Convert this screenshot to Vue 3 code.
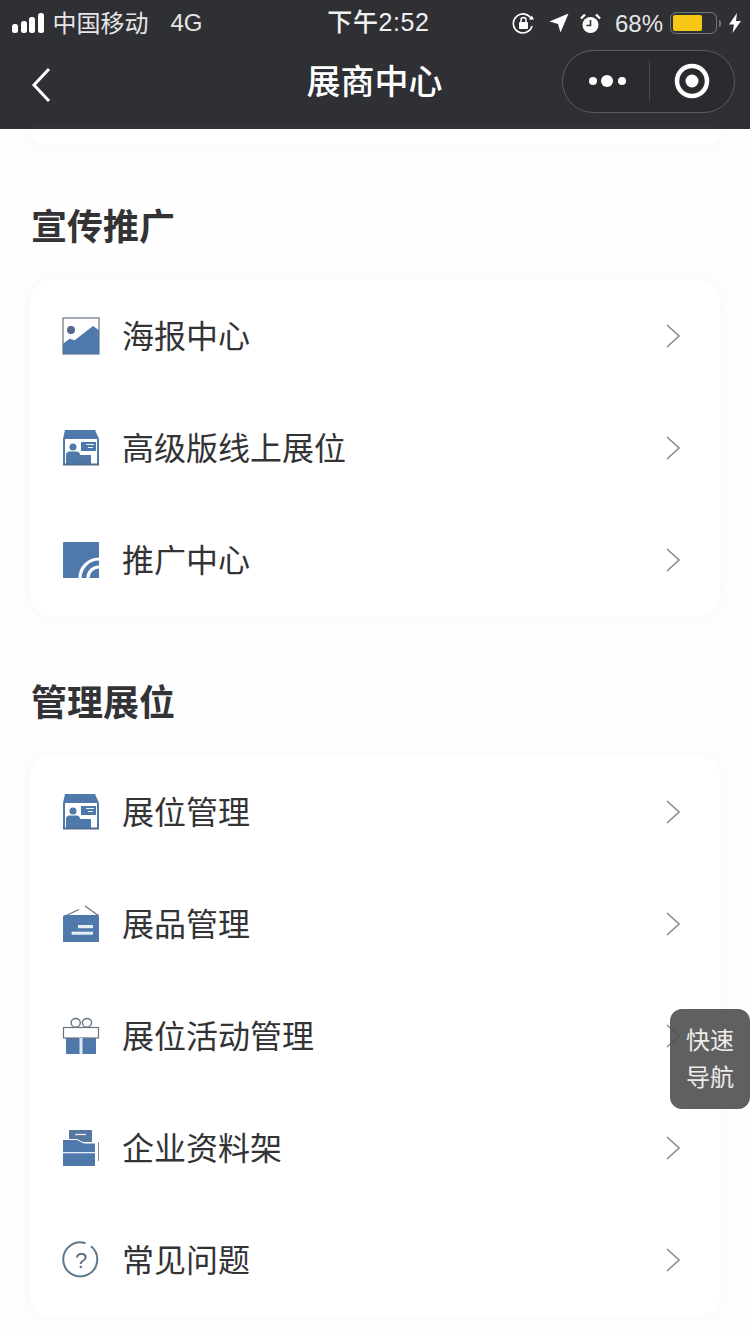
<script setup>
const sections = [
  {
    title: '宣传推广',
    items: [
      { icon: 'poster', label: '海报中心' },
      { icon: 'booth', label: '高级版线上展位' },
      { icon: 'promo', label: '推广中心' },
    ],
  },
  {
    title: '管理展位',
    items: [
      { icon: 'booth', label: '展位管理' },
      { icon: 'sign', label: '展品管理' },
      { icon: 'gift', label: '展位活动管理' },
      { icon: 'folder', label: '企业资料架' },
      { icon: 'help', label: '常见问题' },
    ],
  },
]
</script>

<template>
  <div class="page">
    <header class="header">
      <div class="status">
        <div class="status-left">
          <div class="signal">
            <i class="b1"></i><i class="b2"></i><i class="b3"></i><i class="b4"></i>
          </div>
          <span class="carrier">中国移动</span>
          <span class="net">4G</span>
        </div>
        <div class="time">下午2:52</div>
        <div class="status-right">
          <svg class="s-lock" width="23" height="22" viewBox="0 0 23 22">
            <path d="M19.5 7.5A9.5 9.5 0 1 0 20 14" fill="none" stroke="#fff" stroke-width="1.6" />
            <path d="M17 7.5h5l-2.2-4z" fill="#fff" />
            <rect x="7" y="10" width="9" height="7" rx="1" fill="#fff" />
            <path d="M9 10V8a2.5 2.5 0 0 1 5 0v2" fill="none" stroke="#fff" stroke-width="1.5" />
          </svg>
          <svg class="s-loc" width="20" height="20" viewBox="0 0 20 20">
            <path d="M19.5 .5 11.5 19.5 9 11 .5 8.5z" fill="#fff" />
          </svg>
          <svg class="s-alarm" width="21" height="21" viewBox="0 0 21 21">
            <circle cx="10.5" cy="12" r="8" fill="#fff" />
            <path d="M10.5 7v5.5H6.5" fill="none" stroke="#2f3034" stroke-width="1.6" />
            <path d="M1 5.5 5 1.5M20 5.5 16 1.500" stroke="#fff" stroke-width="2.4" />
          </svg>
          <span class="pct">68%</span>
          <div class="battery"><div class="battery-fill"></div></div>
          <div class="nub"></div>
          <svg class="s-bolt" width="12" height="20" viewBox="0 0 12 20">
            <path d="M8 0 0 11.500h5L3.500 20 12 8H7z" fill="#fff" />
          </svg>
        </div>
      </div>
      <nav class="nav">
        <svg class="back" width="20" height="36" viewBox="0 0 20 36">
          <path d="M18 2 3 18l15 16" fill="none" stroke="#fff" stroke-width="3" />
        </svg>
        <div class="title">展商中心</div>
        <div class="capsule">
          <svg width="44" height="16" viewBox="0 0 44 16">
            <circle cx="7" cy="8" r="4" fill="#fff" />
            <circle cx="21" cy="8" r="6" fill="#fff" />
            <circle cx="36" cy="8" r="4" fill="#fff" />
          </svg>
          <div class="divider"></div>
          <svg width="36" height="36" viewBox="0 0 36 36">
            <circle cx="18" cy="18" r="15" fill="none" stroke="#fff" stroke-width="4.500" />
            <circle cx="18" cy="18" r="6.500" fill="#fff" />
          </svg>
        </div>
      </nav>
    </header>

    <div class="card-tail"></div>

    <section v-for="section in sections" :key="section.title" class="section">
      <h2 class="section-title">{{ section.title }}</h2>
      <div class="card">
        <div v-for="item in section.items" :key="item.label" class="row">
          <svg class="icon" width="38" height="38" viewBox="-1 -1 38 38">
            <template v-if="item.icon === 'poster'">
              <rect x="0" y="0" width="36" height="36" fill="#fff" stroke="#667383" stroke-width="1.200" />
              <circle cx="8" cy="12" r="4" fill="#55688a" />
              <path d="M0 25.700 6.700 20.700 11.700 22.300 30 8 36 12.300V36H0z" fill="#4f78ab" />
            </template>
            <template v-else-if="item.icon === 'booth'">
              <path d="M2 0h30l4 9H0z" fill="#4f78ab" />
              <path d="M1 9v25M35 9v25" stroke="#4f78ab" stroke-width="2" />
              <circle cx="10" cy="17" r="3.500" fill="#4f78ab" />
              <path d="M3 34V25q0-3 3-3.500h8q3 .5 3 3.500h11v9z" fill="#4f78ab" />
              <rect x="18" y="12" width="15" height="9" fill="#4f78ab" />
              <path d="M23 14.500h8M25 17.500h5" stroke="#e9f0f7" stroke-width="1.200" />
              <rect x="0" y="33.500" width="36" height="2" fill="#4f6d92" />
            </template>
            <template v-else-if="item.icon === 'promo'">
              <path d="M1 0h34a1 1 0 0 1 1 1v35H0V1a1 1 0 0 1 1-1z" fill="#4f78ab" />
              <path d="M36 17A19 19 0 0 0 17 36" fill="none" stroke="#fff" stroke-width="3.200" />
              <path d="M36 25A11 11 0 0 0 25 36" fill="none" stroke="#fff" stroke-width="3.200" />
            </template>
            <template v-else-if="item.icon === 'sign'">
              <path d="M2 9h32a2 2 0 0 1 2 2v25H0V11a2 2 0 0 1 2-2z" fill="#4f78ab" />
              <path d="M4 9 16 3.500M22 0l14 10" stroke="#667383" stroke-width="1.200" fill="none" />
              <rect x="15" y="19" width="15" height="3.200" fill="#e6eef6" />
              <rect x="8.700" y="25.700" width="21.300" height="3" fill="#e6eef6" />
            </template>
            <template v-else-if="item.icon === 'gift'">
              <ellipse cx="12.700" cy="4.800" rx="4.600" ry="4.300" fill="none" stroke="#667383" stroke-width="1.400" />
              <ellipse cx="24" cy="4.800" rx="4.600" ry="4.300" fill="none" stroke="#667383" stroke-width="1.400" />
              <rect x="3" y="20" width="30" height="16" fill="#4f78ab" />
              <rect x="0.500" y="9.500" width="35" height="10.500" fill="#fff" stroke="#667383" stroke-width="1.200" />
              <rect x="16.500" y="20" width="3" height="16" fill="#dfeaf3" />
            </template>
            <template v-else-if="item.icon === 'folder'">
              <path d="M7 0h21a1 1 0 0 1 1 1v11H6V1a1 1 0 0 1 1-1z" fill="#56779f" />
              <path d="M12 4.500h11" stroke="#e6eef6" stroke-width="1.300" />
              <path d="M0 9h14l7 3.500h11V36H0z" fill="#fff" />
              <path d="M0 10h14l7 3.500h11V36H0z" fill="#4f78ab" />
              <rect x="0" y="22" width="32" height="1.300" fill="#e6eef6" />
              <path d="M35.500 12v19" stroke="#7e8c9c" stroke-width="1" />
            </template>
            <template v-else>
              <path d="M22.500 1.200A17 17 0 1 0 28 4.200" fill="none" stroke="#5d7a8c" stroke-width="2" />
              <text x="18" y="26" class="qmark" text-anchor="middle">?</text>
            </template>
          </svg>
          <span class="label">{{ item.label }}</span>
          <svg class="arrow" width="14" height="24" viewBox="0 0 14 24">
            <path d="M1 1l12 11L1 23" fill="none" stroke="#8c8c8e" stroke-width="1.600" />
          </svg>
        </div>
      </div>
    </section>

    <div class="quick-nav">
      <span>快速</span>
      <span>导航</span>
    </div>
  </div>
</template>

<style scoped>
.page {
  position: relative;
  width: 750px;
  height: 1334px;
  overflow: hidden;
  background: #fefefe;
  font-family: "Liberation Sans", "Noto Sans CJK SC", sans-serif;
}
.header {
  height: 129px;
  background: #2f3034;
  color: #fff;
}
.status {
  height: 40px;
  padding: 2px 9px 0 12px;
  box-sizing: border-box;
  display: grid;
  grid-template-columns: minmax(0, 1fr) auto minmax(0, 1fr);
  align-items: center;
  font-size: 24px;
}
.status-left {
  display: flex;
  align-items: center;
  color: #e6e6e6;
}
.signal {
  display: flex;
  align-items: flex-end;
  gap: 2.500px;
  height: 20px;
  margin-right: 9px;
}
.signal i {
  width: 6px;
  background: #fff;
  border-radius: 2.500px;
}
.b1 { height: 9px; }
.b2 { height: 12px; }
.b3 { height: 16px; }
.b4 { height: 20px; }
.carrier {
  margin-right: 22px;
  padding-bottom: 3px;
}
.time {
  margin-left: 4px;
  margin-bottom: 6px;
  font-size: 25px;
  font-weight: 500;
  letter-spacing: 0.6px;
  color: #f0f0f0;
}
.status-right {
  display: flex;
  align-items: center;
  justify-content: flex-end;
  color: #e6e6e6;
}
.s-loc {
  margin-left: 14px;
}
.s-alarm {
  margin-left: 11px;
}
.pct {
  margin-left: 14px;
  margin-right: 7px;
  padding-top: 2px;
}
.battery {
  width: 47px;
  height: 22px;
  box-sizing: border-box;
  padding: 2px;
  border: 1.500px solid #77777a;
  border-radius: 6px;
}
.battery-fill {
  width: 29px;
  height: 100%;
  background: #f6c714;
  border-radius: 2px;
}
.nub {
  width: 2px;
  height: 7px;
  margin-left: 2px;
  background: #77777a;
  border-radius: 0 2px 2px 0;
}
.s-bolt {
  margin-left: 8px;
}
.nav {
  height: 89px;
  padding: 0 15px 7px 14px;
  box-sizing: border-box;
  display: grid;
  grid-template-columns: minmax(0, 1fr) auto minmax(0, 1fr);
  align-items: center;
}
.back {
  display: block;
  margin: 8px 0 0 17px;
}
.title {
  margin-bottom: 4px;
  font-size: 34px;
  font-weight: 500;
}
.capsule {
  justify-self: end;
  width: 173px;
  height: 63px;
  box-sizing: border-box;
  padding-left: 23px;
  display: flex;
  align-items: center;
  background: #2a2b2e;
  border: 1px solid #5c5d60;
  border-radius: 32px;
}
.divider {
  width: 1px;
  height: 40px;
  margin: 0 24px 0 19px;
  background: #4c4d50;
}
.card-tail {
  height: 16px;
  margin: 0 30px -5px;
  background: #fff;
  border-radius: 0 0 20px 20px;
  box-shadow: 0 2px 12px rgba(205, 170, 195, 0.1);
}
.section {
  padding-top: 59px;
}
.section-title {
  margin: 2px 0 25px 31px;
  font-size: 36px;
  line-height: 54px;
  font-weight: 700;
  color: #333336;
}
.card {
  margin: 0 30px;
  background: #fff;
  border-radius: 20px;
  box-shadow: 0 0 14px rgba(205, 170, 195, 0.09);
}
.row {
  height: 112px;
  padding: 0 40px 0 32px;
  display: flex;
  align-items: center;
}
.icon {
  flex: none;
  overflow: visible;
}
.qmark {
  font-family: "Liberation Sans", sans-serif;
  font-size: 22px;
  font-weight: 400;
  fill: #5f6c7c;
}
.label {
  flex: 1;
  margin-left: 22px;
  margin-bottom: 5px;
  font-size: 32px;
  color: #333336;
}
.arrow {
  flex: none;
}
.quick-nav {
  position: absolute;
  top: 1009px;
  left: 670px;
  width: 80px;
  height: 100px;
  display: flex;
  flex-direction: column;
  align-items: center;
  justify-content: center;
  background: rgba(82, 82, 82, 0.92);
  border-radius: 12px;
  font-size: 24px;
  line-height: 37px;
  color: #ececec;
}
</style>
